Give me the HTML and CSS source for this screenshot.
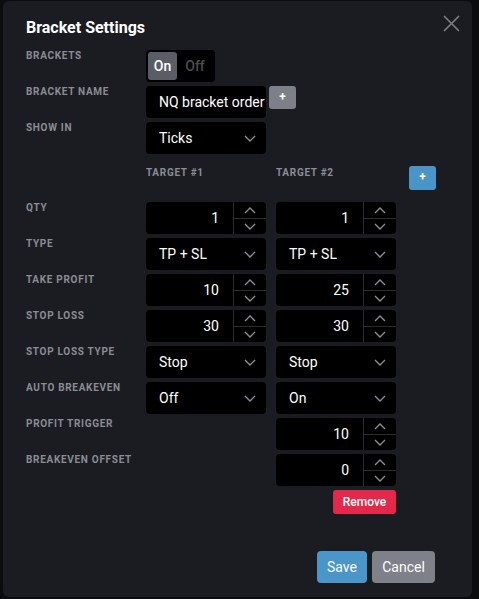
FILE: index.html
```html
<!DOCTYPE html>
<html lang="en">
<head>
    <meta charset="UTF-8">
    <meta name="viewport" content="width=device-width, initial-scale=1.0">
    <title>Bracket Settings</title>
    <link rel="stylesheet" href="styles.css">
</head>
<body>
    <div class="modal">
        <div class="modal-head">
            <h1>Bracket Settings</h1>
            <button class="close-btn" aria-label="Close">
                <svg width="17" height="17" viewBox="0 0 17 17"><path d="M1 1L16 16M16 1L1 16" stroke="#7c7e83" stroke-width="1.6" fill="none"/></svg>
            </button>
        </div>

        <div class="form">
            <div class="label">Brackets</div>
            <div class="toggle span">
                <span class="toggle-opt active">On</span>
                <span class="toggle-opt">Off</span>
            </div>

            <div class="label">Bracket Name</div>
            <div class="name-row span">
                <input class="field text" type="text" value="NQ bracket order">
                <button class="small-btn grey">+</button>
            </div>

            <div class="label">Show In</div>
            <div class="field select">Ticks <svg class="chev" width="12" height="7" viewBox="0 0 12 7"><path d="M1 1l5 5 5-5" stroke="#8c8e94" stroke-width="1.4" fill="none"/></svg></div>
            <div></div>
            <div></div>

            <div></div>
            <div class="label head">Target #1</div>
            <div class="label head">Target #2</div>
            <div class="head"><button class="small-btn blue">+</button></div>

            <div class="label">Qty</div>
            <div class="field number"><span class="val">1</span><div class="spin"><span><svg width="12" height="7" viewBox="0 0 12 7"><path d="M1 6l5-5 5 5" stroke="#8c8e94" stroke-width="1.4" fill="none"/></svg></span><span><svg width="12" height="7" viewBox="0 0 12 7"><path d="M1 1l5 5 5-5" stroke="#8c8e94" stroke-width="1.4" fill="none"/></svg></span></div></div>
            <div class="field number"><span class="val">1</span><div class="spin"><span><svg width="12" height="7" viewBox="0 0 12 7"><path d="M1 6l5-5 5 5" stroke="#8c8e94" stroke-width="1.4" fill="none"/></svg></span><span><svg width="12" height="7" viewBox="0 0 12 7"><path d="M1 1l5 5 5-5" stroke="#8c8e94" stroke-width="1.4" fill="none"/></svg></span></div></div>
            <div></div>

            <div class="label">Type</div>
            <div class="field select">TP + SL <svg class="chev" width="12" height="7" viewBox="0 0 12 7"><path d="M1 1l5 5 5-5" stroke="#8c8e94" stroke-width="1.4" fill="none"/></svg></div>
            <div class="field select">TP + SL <svg class="chev" width="12" height="7" viewBox="0 0 12 7"><path d="M1 1l5 5 5-5" stroke="#8c8e94" stroke-width="1.4" fill="none"/></svg></div>
            <div></div>

            <div class="label">Take Profit</div>
            <div class="field number"><span class="val">10</span><div class="spin"><span><svg width="12" height="7" viewBox="0 0 12 7"><path d="M1 6l5-5 5 5" stroke="#8c8e94" stroke-width="1.4" fill="none"/></svg></span><span><svg width="12" height="7" viewBox="0 0 12 7"><path d="M1 1l5 5 5-5" stroke="#8c8e94" stroke-width="1.4" fill="none"/></svg></span></div></div>
            <div class="field number"><span class="val">25</span><div class="spin"><span><svg width="12" height="7" viewBox="0 0 12 7"><path d="M1 6l5-5 5 5" stroke="#8c8e94" stroke-width="1.4" fill="none"/></svg></span><span><svg width="12" height="7" viewBox="0 0 12 7"><path d="M1 1l5 5 5-5" stroke="#8c8e94" stroke-width="1.4" fill="none"/></svg></span></div></div>
            <div></div>

            <div class="label">Stop Loss</div>
            <div class="field number"><span class="val">30</span><div class="spin"><span><svg width="12" height="7" viewBox="0 0 12 7"><path d="M1 6l5-5 5 5" stroke="#8c8e94" stroke-width="1.4" fill="none"/></svg></span><span><svg width="12" height="7" viewBox="0 0 12 7"><path d="M1 1l5 5 5-5" stroke="#8c8e94" stroke-width="1.4" fill="none"/></svg></span></div></div>
            <div class="field number"><span class="val">30</span><div class="spin"><span><svg width="12" height="7" viewBox="0 0 12 7"><path d="M1 6l5-5 5 5" stroke="#8c8e94" stroke-width="1.4" fill="none"/></svg></span><span><svg width="12" height="7" viewBox="0 0 12 7"><path d="M1 1l5 5 5-5" stroke="#8c8e94" stroke-width="1.4" fill="none"/></svg></span></div></div>
            <div></div>

            <div class="label">Stop Loss Type</div>
            <div class="field select">Stop <svg class="chev" width="12" height="7" viewBox="0 0 12 7"><path d="M1 1l5 5 5-5" stroke="#8c8e94" stroke-width="1.4" fill="none"/></svg></div>
            <div class="field select">Stop <svg class="chev" width="12" height="7" viewBox="0 0 12 7"><path d="M1 1l5 5 5-5" stroke="#8c8e94" stroke-width="1.4" fill="none"/></svg></div>
            <div></div>

            <div class="label">Auto Breakeven</div>
            <div class="field select">Off <svg class="chev" width="12" height="7" viewBox="0 0 12 7"><path d="M1 1l5 5 5-5" stroke="#8c8e94" stroke-width="1.4" fill="none"/></svg></div>
            <div class="field select">On <svg class="chev" width="12" height="7" viewBox="0 0 12 7"><path d="M1 1l5 5 5-5" stroke="#8c8e94" stroke-width="1.4" fill="none"/></svg></div>
            <div></div>

            <div class="label">Profit Trigger</div>
            <div></div>
            <div class="field number"><span class="val">10</span><div class="spin"><span><svg width="12" height="7" viewBox="0 0 12 7"><path d="M1 6l5-5 5 5" stroke="#8c8e94" stroke-width="1.4" fill="none"/></svg></span><span><svg width="12" height="7" viewBox="0 0 12 7"><path d="M1 1l5 5 5-5" stroke="#8c8e94" stroke-width="1.4" fill="none"/></svg></span></div></div>
            <div></div>

            <div class="label">Breakeven Offset</div>
            <div></div>
            <div class="field number"><span class="val">0</span><div class="spin"><span><svg width="12" height="7" viewBox="0 0 12 7"><path d="M1 6l5-5 5 5" stroke="#8c8e94" stroke-width="1.4" fill="none"/></svg></span><span><svg width="12" height="7" viewBox="0 0 12 7"><path d="M1 1l5 5 5-5" stroke="#8c8e94" stroke-width="1.4" fill="none"/></svg></span></div></div>
            <div></div>

            <div></div>
            <div></div>
            <div class="remove-cell"><button class="remove-btn">Remove</button></div>
            <div></div>
        </div>

        <div class="footer">
            <button class="btn save">Save</button>
            <button class="btn cancel">Cancel</button>
        </div>
    </div>
</body>
</html>
```

FILE: styles.css
```css
body {
    margin: 0;
    padding: 0;
    background: #0b0c0e;
    font-family: Roboto, 'Liberation Sans', sans-serif;
    color: #ffffff;
}

.modal {
    margin: 1px 0 0 3px;
    width: 469px;
    height: 596px;
    box-sizing: border-box;
    padding: 15px 36px 14px 23px;
    background: #1b1c21;
    border-radius: 6px;
    display: flex;
    flex-direction: column;
}

.modal-head {
    display: flex;
    justify-content: space-between;
    align-items: flex-start;
}

h1 {
    margin: 0;
    font-size: 16px;
    line-height: 24px;
    font-weight: 700;
}

.close-btn {
    background: none;
    border: none;
    padding: 0;
    margin: -1px -24px 0 0;
    cursor: pointer;
    line-height: 0;
}

/* label column, two target columns, and a narrow column for the add button */
.form {
    margin-top: 10px;
    display: grid;
    grid-template-columns: 110px 120px 120px 27px;
    grid-template-rows: repeat(3, 32px) 40px repeat(8, 32px) 24px;
    column-gap: 10px;
    row-gap: 4px;
}

.label {
    font-size: 10px;
    line-height: 10px;
    font-weight: 700;
    letter-spacing: 0.7px;
    text-transform: uppercase;
    color: #8a8d94;
    padding-top: 1px;
    white-space: nowrap;
}

.span {
    grid-column: span 3;
}

.head {
    padding-top: 8px;
}

.label.head {
    padding-top: 10px;
}

.toggle {
    justify-self: start;
    display: flex;
    background: #000;
    border-radius: 4px;
    padding: 2px;
}

.toggle-opt {
    width: 29px;
    display: flex;
    align-items: center;
    justify-content: center;
    font-size: 14px;
    font-weight: 500;
    color: #4b4d53;
    border-radius: 3px;
}

.toggle-opt + .toggle-opt {
    width: 36px;
}

.toggle-opt.active {
    background: #5a5d65;
    color: #fff;
}

.name-row {
    display: flex;
    align-items: flex-start;
    gap: 3px;
}

.field {
    height: 32px;
    box-sizing: border-box;
    background: #000;
    border: none;
    border-radius: 4px;
    color: #fff;
    font-family: inherit;
    font-size: 14px;
}

.text {
    width: 120px;
    padding: 0 0 0 13px;
    outline: none;
}

.select {
    display: flex;
    align-items: center;
    justify-content: space-between;
    padding: 0 10px 0 13px;
}

.number {
    display: flex;
}

.number .val {
    flex: 1;
    text-align: right;
    padding-right: 14px;
    line-height: 32px;
}

.spin {
    width: 32px;
    border-left: 1px solid #2b2c31;
    display: grid;
    grid-template-rows: 1fr 1fr;
}

.spin span {
    display: flex;
    justify-content: center;
    align-items: center;
}

.spin span:last-child {
    border-top: 1px solid #2b2c31;
}

.small-btn {
    width: 27px;
    height: 23px;
    border: none;
    border-radius: 3px;
    color: #fff;
    font-family: inherit;
    font-size: 12px;
    font-weight: 700;
    padding: 0 0 2px;
    cursor: pointer;
}

.small-btn.grey {
    background: #7d8088;
}

.small-btn.blue {
    height: 24px;
    margin-left: 3px;
    background: #4a95c8;
}

.remove-cell {
    display: flex;
    justify-content: flex-end;
}

.remove-btn {
    height: 24px;
    width: 63px;
    border: none;
    border-radius: 3px;
    background: #e2294b;
    color: #fff;
    font-family: inherit;
    font-size: 12px;
    font-weight: 500;
    padding: 0;
}

.footer {
    margin-top: auto;
    display: flex;
    justify-content: flex-end;
    gap: 5px;
    padding-right: 1px;
}

.btn {
    height: 32px;
    border: none;
    border-radius: 4px;
    color: #fff;
    font-family: inherit;
    font-size: 14px;
    padding: 0;
}

.btn.save {
    width: 50px;
    background: #4a96c8;
}

.btn.cancel {
    width: 63px;
    background: #7e8189;
}
```
